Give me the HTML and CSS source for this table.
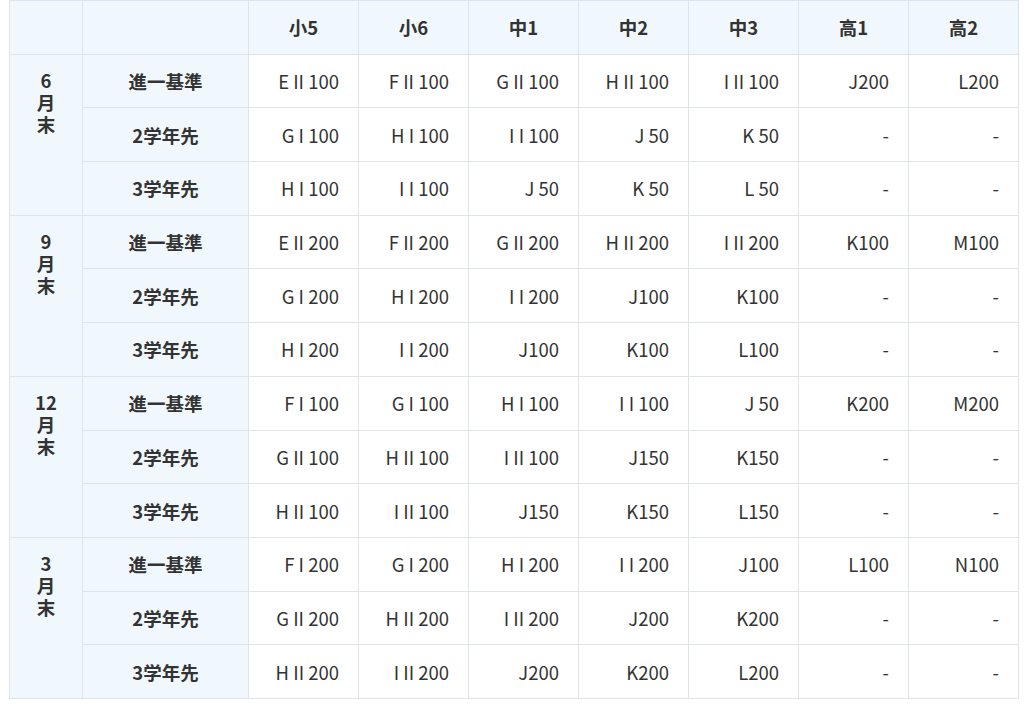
FILE: index.html
```html
<!DOCTYPE html>
<html lang="ja">
<head>
<meta charset="utf-8">
<link rel="stylesheet" href="styles.css">
</head>
<body>
<table class="grid">
<colgroup>
<col class="c-month"><col class="c-kind">
<col><col><col><col><col><col><col>
</colgroup>
<thead>
<tr><th class="hd"></th><th class="hd"></th><th class="hd">小5</th><th class="hd">小6</th><th class="hd">中1</th><th class="hd">中2</th><th class="hd">中3</th><th class="hd">高1</th><th class="hd">高2</th></tr>
</thead>
<tbody>
<tr><th class="month" rowspan="3"><span class="ln">6月末</span></th><th class="kind">進一基準</th><td>E II 100</td><td>F II 100</td><td>G II 100</td><td>H II 100</td><td>I II 100</td><td>J200</td><td>L200</td></tr>
<tr><th class="kind">2学年先</th><td>G I 100</td><td>H I 100</td><td>I I 100</td><td>J 50</td><td>K 50</td><td>-</td><td>-</td></tr>
<tr><th class="kind">3学年先</th><td>H I 100</td><td>I I 100</td><td>J 50</td><td>K 50</td><td>L 50</td><td>-</td><td>-</td></tr>

<tr><th class="month" rowspan="3"><span class="ln">9月末</span></th><th class="kind">進一基準</th><td>E II 200</td><td>F II 200</td><td>G II 200</td><td>H II 200</td><td>I II 200</td><td>K100</td><td>M100</td></tr>
<tr><th class="kind">2学年先</th><td>G I 200</td><td>H I 200</td><td>I I 200</td><td>J100</td><td>K100</td><td>-</td><td>-</td></tr>
<tr><th class="kind">3学年先</th><td>H I 200</td><td>I I 200</td><td>J100</td><td>K100</td><td>L100</td><td>-</td><td>-</td></tr>

<tr><th class="month" rowspan="3"><span class="ln">12月末</span></th><th class="kind">進一基準</th><td>F I 100</td><td>G I 100</td><td>H I 100</td><td>I I 100</td><td>J 50</td><td>K200</td><td>M200</td></tr>
<tr><th class="kind">2学年先</th><td>G II 100</td><td>H II 100</td><td>I II 100</td><td>J150</td><td>K150</td><td>-</td><td>-</td></tr>
<tr><th class="kind">3学年先</th><td>H II 100</td><td>I II 100</td><td>J150</td><td>K150</td><td>L150</td><td>-</td><td>-</td></tr>

<tr><th class="month" rowspan="3"><span class="ln">3月末</span></th><th class="kind">進一基準</th><td>F I 200</td><td>G I 200</td><td>H I 200</td><td>I I 200</td><td>J100</td><td>L100</td><td>N100</td></tr>
<tr><th class="kind">2学年先</th><td>G II 200</td><td>H II 200</td><td>I II 200</td><td>J200</td><td>K200</td><td>-</td><td>-</td></tr>
<tr><th class="kind">3学年先</th><td>H II 200</td><td>I II 200</td><td>J200</td><td>K200</td><td>L200</td><td>-</td><td>-</td></tr>
</tbody>
</table>
</body>
</html>
```

FILE: styles.css
```css
html, body {
  margin: 0;
  padding: 0;
  background: #ffffff;
}
body {
  padding: 0 5px 0 9px;
  font-family: "Noto Sans CJK JP", "Noto Sans", sans-serif;
  color: #333333;
}
.grid {
  width: 1010px;
  table-layout: fixed;
  border-collapse: collapse;
  font-size: 18.5px;
}
.c-month { width: 73px; }
.c-kind { width: 166px; }
.grid tr { height: 53.7px; }
.grid th, .grid td {
  border: 1px solid #dfe4ea;
  padding: 0 19px 0 0;
  line-height: 22px;
}
.grid td {
  text-align: right;
  font-weight: 400;
  background: #ffffff;
}
.grid .hd {
  background: #f1f8fd;
  font-weight: 700;
  text-align: center;
  padding: 0;
}
.grid .kind {
  background: #f1f8fd;
  font-weight: 700;
  text-align: center;
  padding: 0;
}
.grid .month {
  background: #f1f8fd;
  font-weight: 700;
  text-align: center;
  vertical-align: top;
  padding: 14px 0 0 0;
}
.ln {
  display: block;
  width: 24px;
  margin: 0 auto;
  line-height: 22px;
  word-break: break-all;
}
```
